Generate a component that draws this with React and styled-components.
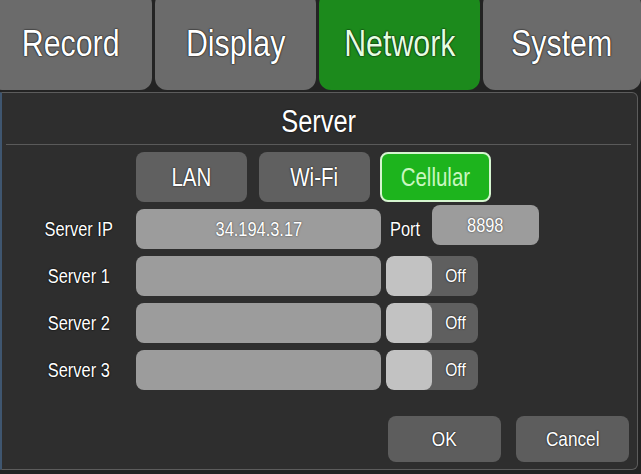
import React, { useState } from "react";
import styled, { createGlobalStyle } from "styled-components";

const GlobalStyle = createGlobalStyle`
  html, body {
    margin: 0;
    padding: 0;
    background: #232323;
    overflow: hidden;
  }
  body {
    font-family: "Liberation Sans", Arial, sans-serif;
  }
`;

// the device UI uses a condensed Helvetica; squeeze Liberation Sans to match
const Narrow = styled.span`
  display: inline-block;
  white-space: nowrap;
  transform: scaleX(${(p) => p.k || 0.82});
  transform-origin: ${(p) => p.origin || "center"};
`;

const Screen = styled.div`
  width: 641px;
  height: 474px;
  background: #232323;
  display: flex;
  flex-direction: column;
  overflow: hidden;
`;

const TabBar = styled.div`
  height: 90px;
  margin-left: -10px;
  display: grid;
  grid-template-columns: 162px 161px 161px 1fr;
  column-gap: 3px;
  overflow: hidden;
`;

const Tab = styled.div`
  margin-top: -8px;
  height: 98px;
  border-radius: 12px;
  background: ${(p) => (p.active ? "#1c8a1c" : "#6b6b6b")};
  color: ${(p) => (p.active ? "#e4ffe0" : "#ffffff")};
  font-size: 37px;
  display: flex;
  align-items: center;
  justify-content: center;
  padding-top: 6px;
  box-sizing: border-box;
  text-shadow: 0 0 2px #000, 0 0 1px #000;
`;

const Panel = styled.div`
  margin-top: 2px;
  width: 638px;
  height: 378px;
  box-sizing: border-box;
  background: #2e2e2e;
  border: 1px solid #5c5c5c;
  border-left: 2px solid #3f5670;
  border-radius: 0 6px 6px 0;
  display: flex;
  flex-direction: column;
`;

const Title = styled.div`
  height: 52px;
  margin: 0 6px 0 4px;
  border-bottom: 1px solid #5a5a5a;
  color: #fff;
  font-size: 31px;
  display: flex;
  align-items: center;
  justify-content: center;
  padding-top: 7px;
  box-sizing: border-box;
  text-shadow: 0 0 2px #000;
`;

const Form = styled.div`
  display: flex;
  flex-direction: column;
  gap: 7px;
  padding: 7px 0 0 0;
`;

const Row = styled.div`
  display: flex;
  align-items: center;
  height: ${(p) => p.h || 40}px;
`;

const Label = styled.div`
  width: 112px;
  margin: 0 1px 0 21px;
  text-align: center;
  color: #fff;
  font-size: 20px;
  text-shadow: 0 0 2px #000, 0 0 1px #000;
`;

const TypeButton = styled.div`
  width: 111px;
  height: 50px;
  box-sizing: border-box;
  margin-right: ${(p) => p.gap || 0}px;
  border-radius: 8px;
  background: ${(p) => (p.active ? "#1db41d" : "#606060")};
  border: ${(p) => (p.active ? "2px solid #d6f5d0" : "none")};
  color: ${(p) => (p.active ? "#c9f7c0" : "#fff")};
  font-size: 25px;
  display: flex;
  align-items: center;
  justify-content: center;
  text-shadow: ${(p) => (p.active ? "none" : "0 0 2px #000")};
`;

const Input = styled.div`
  width: ${(p) => p.w}px;
  height: 40px;
  box-sizing: border-box;
  border-radius: 8px;
  background: #9c9c9c;
  color: #fff;
  font-size: 20px;
  display: flex;
  align-items: center;
  justify-content: center;
  text-shadow: 0 0 2px #333;
  margin-top: ${(p) => p.lift || 0}px;
`;

const PortLabel = styled.div`
  width: 42px;
  margin-left: 9px;
  color: #fff;
  font-size: 20px;
  text-shadow: 0 0 2px #000;
`;

const Toggle = styled.div`
  margin-left: 5px;
  width: 92px;
  height: 40px;
  border-radius: 8px;
  background: #5f5f5f;
  display: flex;
  align-items: center;
  overflow: hidden;
`;

const Knob = styled.div`
  width: 46px;
  height: 40px;
  border-radius: 8px;
  background: #c2c2c2;
`;

const ToggleText = styled.div`
  flex: 1;
  text-align: center;
  color: #fff;
  font-size: 19px;
  text-shadow: 0 0 2px #000;
`;

const Actions = styled.div`
  margin-top: 26px;
  display: flex;
  justify-content: flex-end;
  gap: 15px;
  padding-right: 8px;
`;

const ActionButton = styled.div`
  width: 113px;
  height: 46px;
  border-radius: 8px;
  background: #5d5d5d;
  color: #fff;
  font-size: 21px;
  display: flex;
  align-items: center;
  justify-content: center;
  text-shadow: 0 0 2px #000;
`;

const tabs = ["Record", "Display", "Network", "System"];
const types = ["LAN", "Wi-Fi", "Cellular"];
const servers = ["Server 1", "Server 2", "Server 3"];

export default function App() {
  const [tab] = useState("Network");
  const [type, setType] = useState("Cellular");

  return (
    <>
      <GlobalStyle />
      <Screen>
        <TabBar>
          {tabs.map((t) => (
            <Tab key={t} active={t === tab}>
              <Narrow>{t}</Narrow>
            </Tab>
          ))}
        </TabBar>
        <Panel>
          <Title>
            <Narrow>Server</Narrow>
          </Title>
          <Form>
            <Row h={50}>
              <Label />
              {types.map((t, i) => (
                <TypeButton
                  key={t}
                  active={t === type}
                  gap={i === 0 ? 12 : 10}
                  onClick={() => setType(t)}
                >
                  <Narrow>{t}</Narrow>
                </TypeButton>
              ))}
            </Row>
            <Row>
              <Label>
                <Narrow>Server IP</Narrow>
              </Label>
              <Input w={245}>
                <Narrow>34.194.3.17</Narrow>
              </Input>
              <PortLabel>
                <Narrow origin="left">Port</Narrow>
              </PortLabel>
              <Input w={107} lift={-8}>
                <Narrow>8898</Narrow>
              </Input>
            </Row>
            {servers.map((s) => (
              <Row key={s}>
                <Label>
                  <Narrow>{s}</Narrow>
                </Label>
                <Input w={245} />
                <Toggle>
                  <Knob />
                  <ToggleText>
                    <Narrow>Off</Narrow>
                  </ToggleText>
                </Toggle>
              </Row>
            ))}
          </Form>
          <Actions>
            <ActionButton>
              <Narrow>OK</Narrow>
            </ActionButton>
            <ActionButton>
              <Narrow>Cancel</Narrow>
            </ActionButton>
          </Actions>
        </Panel>
      </Screen>
    </>
  );
}
